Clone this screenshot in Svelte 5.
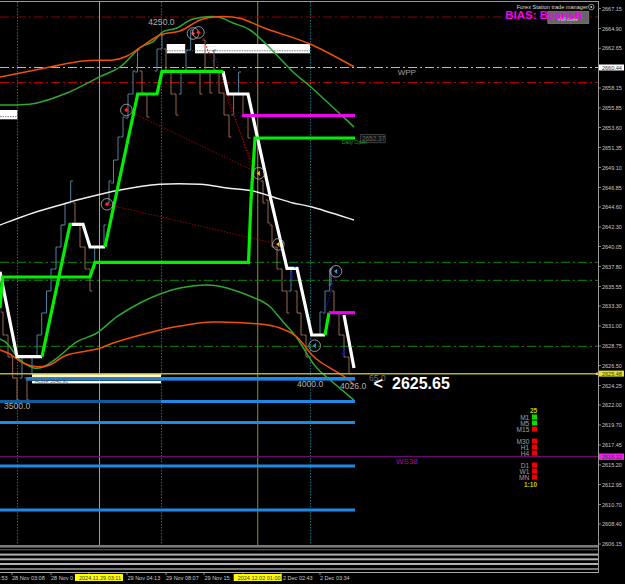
<script lang="ts">
  type Pt = [number, number];
  type Candle = [number, number, number];

  const poly = (pts: Pt[]) => pts.map((p) => p.join(',')).join(' ');

  // smooth line through the points (catmull-rom to bezier)
  function smooth(pts: Pt[]) {
    let d = `M${pts[0][0]} ${pts[0][1]}`;
    for (let i = 0; i < pts.length - 1; i++) {
      const a = pts[Math.max(i - 1, 0)];
      const b = pts[i];
      const c = pts[i + 1];
      const e = pts[Math.min(i + 2, pts.length - 1)];
      const c1x = b[0] + (c[0] - a[0]) / 6;
      const c1y = b[1] + (c[1] - a[1]) / 6;
      const c2x = c[0] - (e[0] - b[0]) / 6;
      const c2y = c[1] - (e[1] - b[1]) / 6;
      d += ` C${c1x.toFixed(1)} ${c1y.toFixed(1)} ${c2x.toFixed(1)} ${c2y.toFixed(1)} ${c[0]} ${c[1]}`;
    }
    return d;
  }

  const axis: Pt[] = [
    [2667.15, 8.7], [2664.9, 28.5], [2662.65, 48.3], [2658.15, 88], [2655.85, 108],
    [2653.6, 127.5], [2651.35, 147.5], [2649.1, 167.5], [2646.85, 187.5], [2644.6, 207],
    [2642.3, 227], [2640.05, 246.5], [2637.8, 266.5], [2635.55, 286.5], [2633.3, 306],
    [2631, 326], [2628.75, 346], [2626.5, 365.5], [2624.25, 385.5], [2622, 405],
    [2619.7, 425], [2617.45, 445], [2615.2, 465], [2612.95, 484.5], [2610.7, 504.5],
    [2608.4, 524], [2606.15, 544],
  ];

  const timeLabels = [
    { x: 0, text: ':53' },
    { x: 12, text: '28 Nov 03:08' },
    { x: 51, text: '28 Nov 0' },
    { x: 127.5, text: '29 Nov 04:13' },
    { x: 166, text: '29 Nov 08:07' },
    { x: 204.5, text: '29 Nov 15:' },
    { x: 283, text: '2 Dec 02:43' },
    { x: 320, text: '2 Dec 03:34' },
  ];
  const timeTicks = [12, 51, 89, 127, 166, 204, 243, 281, 320];
  const timeTags = [
    { x: 75, text: '2024.11.29 03:11' },
    { x: 233.7, text: '2024.12.02 01:00' },
  ];

  const stripes = [
    { y: 545, h: 2.6, fill: '#7a7a7a' },
    { y: 549, h: 1.4, fill: '#4a4a4a' },
    { y: 553.6, h: 2, fill: '#b0b0b0' },
    { y: 558.3, h: 2, fill: '#b0b0b0' },
    { y: 563, h: 2, fill: '#b0b0b0' },
    { y: 568, h: 2, fill: '#777' },
    { y: 572, h: 1, fill: '#aaa' },
  ];

  const bull: Candle[] = [
    [22, 357, 378], [32, 357, 374], [37, 335, 357], [41.7, 313, 335], [46.5, 291, 313],
    [51, 269, 291], [56, 247, 269], [61, 225, 247], [65, 203, 225], [70.7, 181, 203],
    [94.7, 247, 269], [104, 225, 247], [109, 181, 203], [113.5, 160, 183], [118, 137, 160],
    [123, 117, 137], [128, 94, 118], [133, 71, 94], [137.5, 50, 72], [157, 49, 71],
    [162, 35, 49], [181, 71, 94], [186, 50, 71], [190.7, 30, 50], [214, 50, 71],
    [233.6, 94, 115], [238.6, 72, 94], [291, 269, 291], [320, 312, 335], [325, 291, 313],
    [329.7, 269, 291], [331, 268, 285],
  ];
  const bear: Candle[] = [
    [3, 312, 335], [8, 335, 357], [12.7, 357, 378], [17, 378, 400], [27, 378, 400],
    [75, 203, 225], [80, 225, 247], [85, 247, 269], [90, 269, 291], [142, 71, 93],
    [147, 94, 117], [166, 49, 72], [171, 72, 94], [176, 94, 115], [200, 72, 94],
    [205, 40, 71], [210, 71, 93], [219, 71, 93], [224, 93, 115], [229, 115, 137],
    [243, 94, 116], [248, 116, 138], [263, 181, 203], [268, 200, 223], [272, 225, 247],
    [277, 247, 269], [282, 269, 291], [287, 291, 313], [297, 291, 313], [301, 313, 335],
    [306, 335, 357], [334, 291, 313], [339, 313, 335], [344, 335, 357], [349, 357, 374],
  ];

  const bullPath = bull.map(([x, a, b]) => `M${x - 2.4} ${b}H${x}V${a}H${x + 2.4}`).join('');
  const bearPath = bear.map(([x, a, b]) => `M${x - 2.4} ${a}H${x}V${b}H${x + 2.4}`).join('');

  const orangeTop: Pt[] = [
    [0, 77], [50, 67], [83, 61], [113, 60], [127, 56], [140, 47.7], [160, 35], [180, 31],
    [200, 20], [217, 16.7], [240, 18.3], [267, 29], [310, 44], [354, 66.7],
  ];
  const greenTop: Pt[] = [
    [0, 105], [17, 105], [37, 103], [67, 93], [100, 76.7], [120, 67], [140, 47.7], [153, 41.7],
    [163, 31.7], [177, 28], [193, 19], [217, 16.7], [233, 23], [250, 30], [267, 45], [293, 72],
    [312, 88], [354, 127],
  ];
  const whiteCurve: Pt[] = [
    [0, 225], [33, 213], [67, 203], [80, 199.3], [120, 190], [160, 184.3], [200, 184.3],
    [227, 188], [253, 191], [273, 197], [293, 203], [312, 207], [354, 220],
  ];
  const greenLow: Pt[] = [
    [0, 339], [5, 341.7], [10, 347], [20, 360], [33, 367.7], [43, 367], [57, 358], [77, 341.7],
    [97, 333], [117, 316.7], [140, 303], [160, 294], [180, 288], [207, 285], [227, 288],
    [257, 299], [270, 306.7], [283, 321.7], [297, 338], [312, 361.7], [322, 373], [354, 400],
  ];
  const orangeLow: Pt[] = [
    [0, 350], [10, 354], [23, 363], [37, 366.7], [50, 365], [67, 355], [97, 349], [117, 341.7],
    [160, 330], [180, 326], [213, 322], [260, 324], [280, 328], [297, 337], [312, 355],
    [322, 363], [345, 377], [354, 385],
  ];

  const whiteSteps: Pt[][] = [
    [[0, 271.7], [17, 356.7], [42, 356.7]],
    [[72, 224.3], [83, 224.3], [90, 247], [105, 247]],
    [[223, 71.3], [228, 94], [248, 94], [271, 200], [287, 268.3], [297, 268.3], [311.7, 335], [325, 335]],
    [[344, 315], [354, 368]],
  ];
  const greenSteps: Pt[][] = [
    [[42, 356.7], [70, 224.3], [72, 224.3]],
    [[105, 247], [137.7, 94], [157, 94], [162, 71.3], [223, 71.3]],
    [[0, 308], [2.5, 277], [90, 277], [95, 262.3], [248.5, 262.3], [251, 200], [255, 138], [355, 138]],
    [[325, 335], [329, 312.7]],
  ];

  const levels = [
    { y: 17, stroke: '#8f0000' },
    { y: 82.5, stroke: '#b00000' },
    { y: 67.5, stroke: '#b8b8b8' },
    { y: 262.3, stroke: '#0b8a0b' },
    { y: 280.3, stroke: '#0b8a0b' },
    { y: 346.3, stroke: '#0b8a0b' },
  ];
  const blueLines = [401.5, 422.5, 466, 510];

  // kind: d = red diamond, t = left-pointing triangle
  const markers = [
    { x: 126.4, y: 110, color: '#ff2020', kind: 'd' },
    { x: 193, y: 33.5, color: '#ff2020', kind: 'd' },
    { x: 198.4, y: 32.4, color: '#ff2020', kind: 'd' },
    { x: 107, y: 204.3, color: '#ff2020', kind: 'd' },
    { x: 258.7, y: 173.3, color: '#ffc000', kind: 't' },
    { x: 278.3, y: 244.3, color: '#ffc000', kind: 't' },
    { x: 336, y: 271.3, color: '#3f8fe0', kind: 't' },
    { x: 314.7, y: 345.7, color: '#3f8fe0', kind: 't' },
  ];

  function markerPoints(m: { x: number; y: number; kind: string }) {
    if (m.kind === 'd') {
      return `${m.x - 2.2},${m.y} ${m.x},${m.y - 2.2} ${m.x + 2.2},${m.y} ${m.x},${m.y + 2.2}`;
    }
    return `${m.x - 2},${m.y} ${m.x + 1.2},${m.y - 2.6} ${m.x + 1.2},${m.y + 2.6}`;
  }

  const tfGroups = [
    { label: 'M1', y: 417, color: '#00e000' },
    { label: 'M5', y: 423, color: '#00e000' },
    { label: 'M15', y: 429, color: '#f00000' },
    { label: 'M30', y: 441, color: '#f00000' },
    { label: 'H1', y: 447, color: '#f00000' },
    { label: 'H4', y: 453, color: '#f00000' },
    { label: 'D1', y: 465, color: '#f00000' },
    { label: 'W1', y: 471, color: '#f00000' },
    { label: 'MN', y: 477, color: '#f00000' },
  ];
</script>

<svg class="chart" viewBox="0 0 625 584" width="625" height="584" role="img" aria-label="XAUUSD chart">
  <rect width="625" height="584" fill="#000" />

  <!-- session verticals -->
  {#each [17.5, 161.5, 310.5] as x}
    <line class="session" x1={x} x2={x} y1="2" y2="545" />
  {/each}
  <line class="day day--bright" x1="99.5" x2="99.5" y1="2" y2="545" />
  <line class="day" x1="257.7" x2="257.7" y1="2" y2="545" />

  <!-- pivot levels -->
  {#each levels as l}
    <line class="level" x1="0" x2="598" y1={l.y} y2={l.y} stroke={l.stroke} />
  {/each}

  <!-- order blocks -->
  <rect class="block" x="166.7" y="44" width="18.5" height="9.3" />
  <rect class="block" x="195" y="44" width="115" height="9.3" />
  <rect class="block" x="0" y="110" width="17.3" height="9.3" />
  <line class="block-dash" x1="166.7" x2="310" y1="50.8" y2="50.8" />
  <line class="block-dash" x1="0" x2="17.3" y1="116.7" y2="116.7" />
  <text class="block-txt" x="179" y="47.5">·· ·</text>
  <text class="block-txt" x="197" y="47.5">········ · ·</text>

  <!-- candles -->
  <path class="candles" d={bullPath} stroke="#5280a0" />
  <path class="candles" d={bearPath} stroke="#96684d" />

  <!-- signal links -->
  <line class="link" x1="126.4" y1="110" x2="258.7" y2="173.3" />
  <line class="link" x1="107" y1="204.3" x2="278.3" y2="244.3" />
  <line class="link" x1="203" y1="38" x2="255" y2="170" />
  <line class="link" x1="213" y1="50" x2="252" y2="168" />
  <line class="link link--blue" x1="336" y1="271.3" x2="325" y2="313" />

  <!-- moving averages -->
  <path class="curve curve--white" d={smooth(whiteCurve)} />
  <path class="curve" d={smooth(greenTop)} stroke="#2fa82f" />
  <path class="curve" d={smooth(orangeTop)} stroke="#f0500a" />
  <path class="curve" d={smooth(greenLow)} stroke="#2fa82f" />
  <path class="curve" d={smooth(orangeLow)} stroke="#f0500a" />

  <!-- step lines -->
  {#each whiteSteps as pts}
    <polyline class="step" points={poly(pts)} stroke="#fff" />
  {/each}
  {#each greenSteps as pts}
    <polyline class="step" points={poly(pts)} stroke="#00f000" />
  {/each}
  <line class="step" x1="242" x2="355" y1="115.5" y2="115.5" stroke="#f000f0" />
  <line class="step" x1="329" x2="355" y1="312.7" y2="312.7" stroke="#f000f0" />

  <!-- support lines -->
  <rect x="32" y="373" width="129" height="4" fill="#fff8d0" />
  <rect x="32" y="381" width="129" height="2.4" fill="#fff" />
  <line class="yellow" x1="0" x2="598" y1="373.7" y2="373.7" />
  <rect x="26" y="377" width="329" height="3.6" fill="#1e88e5" />
  <line class="block-dash" x1="26" x2="161" y1="378.8" y2="378.8" />
  <text class="tiny" x="35" y="383">Active 3648.96</text>
  {#each blueLines as y}
    <rect x="0" y={y - 1.5} width="355" height="3" fill="#1e88e5" />
  {/each}
  <rect x="0" y="400" width="161" height="3" fill="#0f5c9e" />
  <line class="purple" x1="0" x2="598" y1="456.7" y2="456.7" />

  <!-- arrows -->
  <path class="arrow" d="M291.7 280l-2 -3h1.2v-5h1.6v5h1.2z M295 268l-1.5 -2h3z" />
  <path class="arrow" d="M343.7 356l-2.2 -3h1.3v-5h1.8v5h1.3z" />

  <!-- signal markers -->
  {#each markers as m}
    <circle class="ring" cx={m.x} cy={m.y} r="5.8" />
    <polygon points={markerPoints(m)} fill={m.color} />
  {/each}

  <!-- chart labels -->
  <text class="big-lbl" x="148.3" y="25.3">4250.0</text>
  <text class="big-lbl" x="4" y="408.7">3500.0</text>
  <text class="big-lbl" x="297" y="386.5">4000.0</text>
  <text class="big-lbl" x="340" y="389">4026.0</text>
  <text class="big-lbl big-lbl--dim" x="369" y="381">65.0</text>
  <text class="pivot" x="397.7" y="75">WPP</text>
  <text class="pivot pivot--ws" x="396" y="464.3">WS38</text>

  <rect class="price-box" x="360.3" y="134.5" width="25" height="8.2" rx="0.5" />
  <text class="price-box-txt" x="362" y="141">2652.37</text>
  <text class="daily" x="342" y="143.6">Daily Open</text>

  <text class="last" x="373.5" y="388.5">&lt;</text>
  <text class="last" x="392" y="388.5">2625.65</text>

  <!-- trade manager -->
  <rect class="mgr-box" x="547.8" y="11.5" width="41" height="12" />
  <text class="mgr-box-txt" x="568" y="20.5" text-anchor="middle">Full close</text>
  <text class="mgr" x="516.7" y="9">Forex Station trade manager</text>
  <circle class="mgr-ico" cx="591.3" cy="7" r="2.8" />
  <circle cx="591.3" cy="7" r="1" fill="#ccc" />
  <text class="bias" x="505.3" y="19">BIAS: Bearish</text>

  <!-- timeframe panel -->
  <text class="tf-yellow" x="530" y="413.3">25</text>
  {#each tfGroups as tf}
    <text class="tf-lbl" x="529.3" y={tf.y + 2.5} text-anchor="end">{tf.label}</text>
    <rect x="532" y={tf.y - 2.5} width="5" height="5" fill={tf.color} />
  {/each}
  <text class="tf-yellow" x="524" y="486.6">1:10</text>

  <!-- indicator sub strip -->
  {#each stripes as s}
    <rect x="0" y={s.y} width="598" height={s.h} fill={s.fill} />
  {/each}

  <!-- price axis -->
  <rect x="0" y="1" width="598.5" height="1" fill="#9a9a9a" />
  <rect x="598" y="1" width="1" height="572" fill="#9a9a9a" />
  {#each axis as [price, y]}
    <line class="tick" x1="599" x2="601" y1={y} y2={y} />
    <text class="ax" x="602" y={y + 2}>{price.toFixed(2)}</text>
  {/each}

  <rect x="599" y="64.5" width="25" height="6" fill="#fff" />
  <text class="ax ax--dark" x="602" y="69.5">2660.44</text>
  <rect x="599" y="370.6" width="25" height="6" fill="#e6e020" />
  <text class="ax ax--dark" x="602" y="375.6">2625.48</text>
  <rect x="595.8" y="372.6" width="2.4" height="2.4" fill="#e6e020" />
  <rect x="599" y="453.5" width="25" height="6.4" fill="#f020f0" />
  <text class="ax ax--dark" x="602" y="458.7">2616.12</text>

  <!-- time axis -->
  {#each timeTicks as x}
    <line class="tick" x1={x} x2={x} y1="573" y2="575" />
  {/each}
  {#each timeLabels as t}
    <text class="ax" x={t.x} y="579.7">{t.text}</text>
  {/each}
  {#each timeTags as t}
    <rect x={t.x} y="574" width="48" height="7" fill="#ffff00" />
    <text class="ax ax--dark" x={t.x + 4} y="579.7">{t.text}</text>
  {/each}
</svg>

<style>
  :global(body) {
    background: #000;
  }

  .chart {
    display: block;
  }

  text {
    font-family: 'Liberation Sans', Arial, sans-serif;
  }

  .session {
    stroke: #12708a;
    stroke-width: 1;
    stroke-dasharray: 1.5 1.5;
  }

  .day {
    stroke: #7f7a1c;
    stroke-width: 1.2;
  }

  .day--bright {
    stroke: #b3ac1e;
    stroke-width: 1;
  }

  .level {
    stroke-width: 1;
    stroke-dasharray: 9 3 2 3;
  }

  .block {
    fill: #fff;
  }

  .block-dash {
    stroke: #555;
    stroke-width: 0.8;
    stroke-dasharray: 1.5 1;
  }

  .block-txt {
    font-size: 5px;
    fill: #999;
  }

  .candles {
    fill: none;
    stroke-width: 1;
  }

  .link {
    stroke: #a00000;
    stroke-width: 1;
    stroke-dasharray: 1.5 1.5;
  }

  .link--blue {
    stroke: #1a1ab0;
  }

  .curve {
    fill: none;
    stroke-width: 1.5;
  }

  .curve--white {
    stroke: #eee;
    stroke-width: 1.4;
  }

  .step {
    fill: none;
    stroke-width: 3.2;
    stroke-linejoin: miter;
  }

  .yellow {
    stroke: #b8b41e;
    stroke-width: 1.6;
  }

  .purple {
    stroke: #6a0a6e;
    stroke-width: 1.2;
  }

  .tiny {
    font-size: 5px;
    fill: #555;
  }

  .arrow {
    fill: #1212c0;
  }

  .ring {
    fill: none;
    stroke: #b8b8b8;
    stroke-width: 0.8;
  }

  .big-lbl {
    font-size: 8.6px;
    fill: #b0b0b0;
  }

  .big-lbl--dim {
    fill: #777;
  }

  .pivot {
    font-size: 8px;
    fill: #a0a0a0;
  }

  .pivot--ws {
    fill: #b000b8;
  }

  .price-box {
    fill: #111;
    stroke: #555;
    stroke-width: 0.7;
  }

  .price-box-txt {
    font-size: 6.4px;
    fill: #666;
  }

  .daily {
    font-size: 5px;
    fill: #00b400;
  }

  .last {
    font-size: 16px;
    font-weight: 700;
    fill: #fff;
  }

  .mgr-box {
    fill: #666;
    stroke: #888;
    stroke-width: 0.7;
  }

  .mgr-box-txt {
    font-size: 4.6px;
    fill: #ddd;
  }

  .mgr {
    font-size: 5.6px;
    fill: #ddd;
  }

  .mgr-ico {
    fill: none;
    stroke: #ccc;
    stroke-width: 0.7;
  }

  .bias {
    font-size: 11.5px;
    font-weight: 700;
    fill: #f000f0;
  }

  .tf-yellow {
    font-size: 6.5px;
    font-weight: 700;
    fill: #c8c800;
  }

  .tf-lbl {
    font-size: 6.6px;
    fill: #a0a0a0;
  }

  .tick {
    stroke: #aaa;
    stroke-width: 0.8;
  }

  .ax {
    font-size: 5.5px;
    fill: #c8c8c8;
  }

  .ax--dark {
    fill: #333;
  }
</style>
